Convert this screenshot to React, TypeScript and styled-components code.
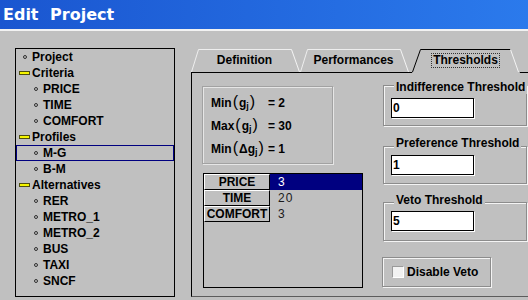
import React from "react";
import styled, { createGlobalStyle } from "styled-components";

const GlobalStyle = createGlobalStyle`
  html, body {
    margin: 0;
    padding: 0;
    background: #c0c0c0;
    overflow: hidden;
  }
  body {
    font-family: "Liberation Sans", Arial, sans-serif;
  }
`;

const Window = styled.div`
  width: 528px;
  height: 300px;
  background: #c0c0c0;
  overflow: hidden;
`;

const TitleBar = styled.div`
  height: 28px;
  padding: 1px 0 0 3px;
  border-bottom: 2px solid #f2f2f2;
  background: linear-gradient(to right, #1a56d0, #2b7aec);
`;

const Title = styled.h1`
  margin: 0;
  font-family: "DejaVu Sans", Verdana, sans-serif;
  font-size: 16px;
  font-weight: bold;
  line-height: 28px;
  word-spacing: 6px;
  color: #fff;
`;

const Body = styled.div`
  display: flex;
  gap: 16px;
  padding: 17px 0 0 15px;
`;

/* ---------- tree ---------- */

const Tree = styled.div`
  width: 160px;
  height: 249px;
  box-sizing: border-box;
  border: 1px solid #000;
  flex-shrink: 0;
`;

const TreeRow = styled.div<{ $level: number; $selected?: boolean }>`
  height: 16px;
  display: flex;
  align-items: center;
  gap: 2px;
  padding-left: ${(p) => 3 + p.$level * 11}px;
  font-size: 12px;
  font-weight: bold;
  color: #000;
  outline: ${(p) => (p.$selected ? "1px solid #000080" : "none")};
  outline-offset: -1px;
`;

const IconSlot = styled.span`
  width: 11px;
  display: flex;
  justify-content: center;
  align-items: center;
`;

const Dot = styled.span`
  width: 2px;
  height: 2px;
  border: 1px solid #303030;
  border-radius: 50%;
`;

const Dash = styled.span`
  width: 9px;
  height: 2px;
  border: 1px solid #505010;
  background: #f6f600;
`;

/* ---------- tabs ---------- */

const Editor = styled.div`
  flex: 1;
  min-width: 0;
  display: flex;
  flex-direction: column;
`;

const TabStrip = styled.div`
  height: 24px;
  display: flex;
  align-items: flex-start;
`;

const Tab = styled.div<{ $active?: boolean; $offset?: number }>`
  position: relative;
  z-index: ${(p) => (p.$active ? 1 : 0)};
  width: 109px;
  height: ${(p) => (p.$active ? 25 : 24)}px;
  margin-left: ${(p) => p.$offset ?? 0}px;
  box-sizing: border-box;
  padding: 6px 2px 0 0;
  display: flex;
  justify-content: center;
  align-items: flex-start;
  font-size: 12px;
  font-weight: bold;
  line-height: 14px;
  color: #000;
  svg {
    position: absolute;
    left: 0;
    top: 0;
  }
`;

const TabLabel = styled.span<{ $focus?: boolean }>`
  position: relative;
  line-height: 13px;
  padding: 0 1px;
  outline: ${(p) => (p.$focus ? "1px dotted #333" : "none")};
`;

/* ---------- panel ---------- */

const Panel = styled.div`
  height: 225px;
  box-sizing: border-box;
  border-top: 1px solid #000;
  border-left: 1px solid #000;
  border-bottom: 1px solid #5c5c5c;
  display: flex;
`;

const LeftCol = styled.div`
  width: 171px;
  flex-shrink: 0;
  box-sizing: border-box;
  padding: 13px 0 0 10px;
`;

const RangeBox = styled.div`
  width: 131px;
  height: 78px;
  box-sizing: border-box;
  border: 1px solid #a2a2a2;
  box-shadow: 1px 1px 0 #e6e6e6, inset 1px 1px 0 #e6e6e6;
  padding: 4px 0 0 8px;
  display: grid;
  grid-template-columns: 57px auto;
  grid-auto-rows: 23px;
  align-items: center;
  font-size: 12px;
  font-weight: bold;
  color: #000;
`;

const Paren = styled.span`
  font-size: 16px;
  font-weight: normal;
  line-height: 1;
  margin: 0 1px;
`;

const Sub = styled.sub`
  font-size: 9px;
  vertical-align: -2px;
`;

const Table = styled.div`
  margin: 9px 0 0 1px;
  width: 160px;
  height: 115px;
  box-sizing: border-box;
  border: 1px solid #000;
  display: grid;
  grid-template-columns: 66px 1fr;
  grid-auto-rows: 16px;
  align-content: start;
`;

const HeaderCell = styled.div`
  box-sizing: border-box;
  border-top: 1px solid #fff;
  border-left: 1px solid #fff;
  border-bottom: 1px solid #000;
  border-right: 1px solid #000;
  text-align: center;
  font-size: 12px;
  font-weight: bold;
  line-height: 14px;
  color: #000;
`;

const ValueCell = styled.div<{ $selected?: boolean }>`
  padding-left: 8px;
  font-size: 12px;
  line-height: 16px;
  letter-spacing: 1px;
  background: ${(p) => (p.$selected ? "#000080" : "transparent")};
  color: ${(p) => (p.$selected ? "#fff" : "#1a1a1a")};
`;

const RightCol = styled.div`
  margin-left: 19px;
  display: flex;
  flex-direction: column;
  align-items: flex-start;
`;

const GroupBox = styled.div<{
  $top: number;
  $height: number;
  $width: number;
  $left?: number;
  $pad?: number;
}>`
  position: relative;
  margin-top: ${(p) => p.$top}px;
  margin-left: ${(p) => p.$left ?? 1}px;
  width: ${(p) => p.$width}px;
  height: ${(p) => p.$height}px;
  box-sizing: border-box;
  border: 1px solid #8c8c8c;
  box-shadow: 1px 1px 0 #f4f4f4, inset 1px 1px 0 #f4f4f4;
  padding: ${(p) => p.$pad ?? 8}px 0 0 7px;
`;

const Caption = styled.span<{ $top: number }>`
  position: absolute;
  top: ${(p) => p.$top}px;
  left: 10px;
  padding: 0 2px;
  background: #c0c0c0;
  font-size: 12px;
  font-weight: bold;
  line-height: 14px;
  color: #000;
  white-space: nowrap;
`;

const Field = styled.input`
  display: block;
  width: 83px;
  height: 20px;
  box-sizing: border-box;
  margin: 0;
  padding: 0 0 0 1px;
  border: 1px solid #000;
  box-shadow: 1px 1px 0 #fff;
  background: #fff;
  font-family: "Liberation Sans", Arial, sans-serif;
  font-size: 12px;
  font-weight: bold;
  color: #000;
  outline: none;
`;

const CheckRow = styled.label`
  height: 100%;
  display: flex;
  align-items: center;
  gap: 3px;
  padding-left: 2px;
  font-size: 12px;
  font-weight: bold;
  color: #000;
`;

const CheckBox = styled.span`
  width: 12px;
  height: 12px;
  box-sizing: border-box;
  border-top: 1px solid #9a9a9a;
  border-left: 1px solid #9a9a9a;
  border-bottom: 1px solid #fff;
  border-right: 1px solid #fff;
  background: #f2f2f2;
`;

type TreeItem = { label: string; level: number; icon: "dot" | "dash"; selected?: boolean };

const treeItems: TreeItem[] = [
  { label: "Project", level: 0, icon: "dot" },
  { label: "Criteria", level: 0, icon: "dash" },
  { label: "PRICE", level: 1, icon: "dot" },
  { label: "TIME", level: 1, icon: "dot" },
  { label: "COMFORT", level: 1, icon: "dot" },
  { label: "Profiles", level: 0, icon: "dash" },
  { label: "M-G", level: 1, icon: "dot", selected: true },
  { label: "B-M", level: 1, icon: "dot" },
  { label: "Alternatives", level: 0, icon: "dash" },
  { label: "RER", level: 1, icon: "dot" },
  { label: "METRO_1", level: 1, icon: "dot" },
  { label: "METRO_2", level: 1, icon: "dot" },
  { label: "BUS", level: 1, icon: "dot" },
  { label: "TAXI", level: 1, icon: "dot" },
  { label: "SNCF", level: 1, icon: "dot" },
];

const thresholds = [
  { name: "PRICE", value: "3" },
  { name: "TIME", value: "20" },
  { name: "COMFORT", value: "3" },
];

function TabShape({ active }: { active?: boolean }) {
  const w = 109;
  if (active) {
    return (
      <svg width={w} height={25}>
        <polygon points={`0,25 8,2 ${w - 10},2 ${w - 1},25`} fill="#c0c0c0" />
        <polyline points={`0.5,24 8.5,1.5 ${w - 10.5},1.5`} fill="none" stroke="#000" />
        <line x1={w - 10.5} y1={1.5} x2={w - 2.5} y2={24} stroke="#f4f4f4" />
      </svg>
    );
  }
  return (
    <svg width={w} height={24}>
      <polyline points={`0.5,24 7.5,1.5 ${w - 8.5},1.5`} fill="none" stroke="#eeeeee" />
      <line x1={w - 8.5} y1={1.5} x2={w - 0.5} y2={24} stroke="#f4f4f4" />
    </svg>
  );
}

export default function App() {
  return (
    <Window>
      <GlobalStyle />
      <TitleBar>
        <Title>Edit Project</Title>
      </TitleBar>
      <Body>
        <Tree>
          {treeItems.map((item) => (
            <TreeRow key={item.label} $level={item.level} $selected={item.selected}>
              <IconSlot>{item.icon === "dot" ? <Dot /> : <Dash />}</IconSlot>
              {item.label}
            </TreeRow>
          ))}
        </Tree>

        <Editor>
          <TabStrip>
            <Tab>
              <TabShape />
              <TabLabel>Definition</TabLabel>
            </Tab>
            <Tab>
              <TabShape />
              <TabLabel>Performances</TabLabel>
            </Tab>
            <Tab $active $offset={3}>
              <TabShape active />
              <TabLabel $focus>Thresholds</TabLabel>
            </Tab>
          </TabStrip>

          <Panel>
            <LeftCol>
              <RangeBox>
                <span>
                  Min<Paren>(</Paren>g<Sub>j</Sub><Paren>)</Paren>
                </span>
                <span>= 2</span>
                <span>
                  Max<Paren>(</Paren>g<Sub>j</Sub><Paren>)</Paren>
                </span>
                <span>= 30</span>
                <span>
                  Min<Paren>(</Paren>Δg<Sub>j</Sub><Paren>)</Paren>
                </span>
                <span>= 1</span>
              </RangeBox>

              <Table>
                {thresholds.map((row, i) => (
                  <React.Fragment key={row.name}>
                    <HeaderCell>{row.name}</HeaderCell>
                    <ValueCell $selected={i === 0}>{row.value}</ValueCell>
                  </React.Fragment>
                ))}
              </Table>
            </LeftCol>

            <RightCol>
              <GroupBox $top={12} $height={41} $width={144} $pad={12}>
                <Caption $top={-6}>Indifference Threshold</Caption>
                <Field readOnly value="0" />
              </GroupBox>
              <GroupBox $top={20} $height={38} $width={144}>
                <Caption $top={-11}>Preference Threshold</Caption>
                <Field readOnly value="1" />
              </GroupBox>
              <GroupBox $top={18} $height={39} $width={144}>
                <Caption $top={-10}>Veto Threshold</Caption>
                <Field readOnly value="5" />
              </GroupBox>
              <GroupBox $top={16} $height={30} $width={109} $left={0} $pad={0}>
                <CheckRow>
                  <CheckBox />
                  Disable Veto
                </CheckRow>
              </GroupBox>
            </RightCol>
          </Panel>
        </Editor>
      </Body>
    </Window>
  );
}
